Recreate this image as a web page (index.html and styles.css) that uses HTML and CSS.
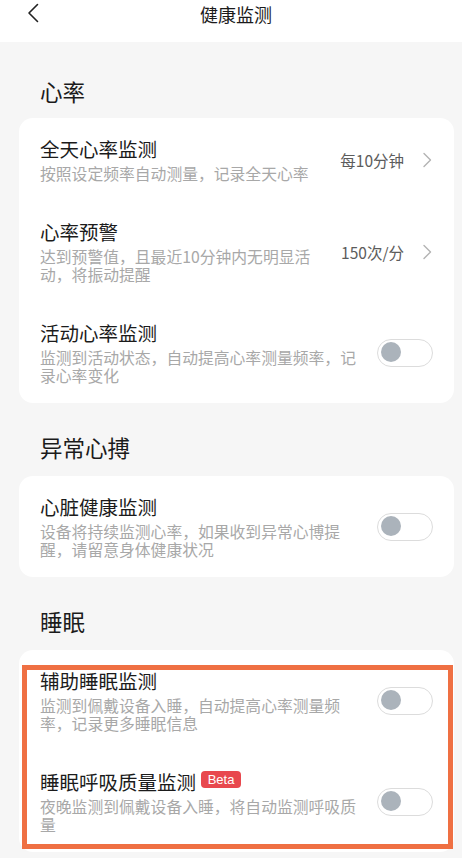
FILE: index.html
```html
<!DOCTYPE html>
<html lang="zh-CN">
<head>
<meta charset="utf-8">
<title>健康监测</title>
<link rel="stylesheet" href="styles.css">
</head>
<body>
<div class="page">
  <header class="topbar">
    <svg class="back" width="12" height="20" viewBox="0 0 12 20"><path d="M10.5 1.5 L2 10 L10.5 18.5" fill="none" stroke="#222" stroke-width="1.6" stroke-linecap="round" stroke-linejoin="round"/></svg>
    <div class="title">健康监测</div>
  </header>

  <main class="content">
    <h2 class="section first">心率</h2>
    <div class="card">
      <div class="row">
        <div class="text">
          <div class="name">全天心率监测</div>
          <div class="desc">按照设定频率自动测量，记录全天心率</div>
        </div>
        <div class="value">每10分钟</div>
        <svg class="chev" width="11" height="16" viewBox="0 0 11 16"><path d="M2 1.5 L8.5 8 L2 14.5" fill="none" stroke="#b3b3b3" stroke-width="1.4" stroke-linecap="round" stroke-linejoin="round"/></svg>
      </div>
      <div class="row">
        <div class="text">
          <div class="name">心率预警</div>
          <div class="desc">达到预警值，且最近10分钟内无明显活动，将振动提醒</div>
        </div>
        <div class="value">150次/分</div>
        <svg class="chev" width="11" height="16" viewBox="0 0 11 16"><path d="M2 1.5 L8.5 8 L2 14.5" fill="none" stroke="#b3b3b3" stroke-width="1.4" stroke-linecap="round" stroke-linejoin="round"/></svg>
      </div>
      <div class="row">
        <div class="text wide">
          <div class="name">活动心率监测</div>
          <div class="desc">监测到活动状态，自动提高心率测量频率，记录心率变化</div>
        </div>
        <div class="toggle"><span class="knob"></span></div>
      </div>
    </div>

    <h2 class="section">异常心搏</h2>
    <div class="card">
      <div class="row">
        <div class="text wide">
          <div class="name">心脏健康监测</div>
          <div class="desc">设备将持续监测心率，如果收到异常心博提醒，请留意身体健康状况</div>
        </div>
        <div class="toggle"><span class="knob"></span></div>
      </div>
    </div>

    <h2 class="section">睡眠</h2>
    <div class="card marked">
      <div class="row">
        <div class="text wide">
          <div class="name">辅助睡眠监测</div>
          <div class="desc">监测到佩戴设备入睡，自动提高心率测量频率，记录更多睡眠信息</div>
        </div>
        <div class="toggle"><span class="knob"></span></div>
      </div>
      <div class="row">
        <div class="text wide">
          <div class="name">睡眠呼吸质量监测<span class="badge">Beta</span></div>
          <div class="desc">夜晚监测到佩戴设备入睡，将自动监测呼吸质量</div>
        </div>
        <div class="toggle"><span class="knob"></span></div>
      </div>
      <div class="highlight"></div>
    </div>
  </main>
</div>
</body>
</html>
```

FILE: styles.css
```css
* { box-sizing: border-box; }
html, body {
  margin: 0;
  padding: 0;
}
body {
  width: 462px;
  height: 858px;
  overflow: hidden;
  background: #f6f6f6;
  font-family: "Noto Sans CJK SC", "Noto Sans", sans-serif;
  color: #1b1b1b;
}
.page {
  width: 462px;
}
.topbar {
  position: relative;
  height: 42px;
  background: #ffffff;
}
.back {
  position: absolute;
  left: 27px;
  top: 3px;
}
.title {
  text-align: center;
  font-size: 18px;
  line-height: 29px;
  padding-left: 10px;
  color: #1b1b1b;
}
.content {
  padding: 0 8px 0 19px;
}
.section {
  margin: 0;
  font-weight: normal;
  font-size: 22.5px;
  line-height: 32px;
  padding: 28px 0 13px 21px;
  color: #1b1b1b;
}
.section.first {
  padding-top: 33px;
  padding-bottom: 11px;
}
.card {
  background: #ffffff;
  border-radius: 14px;
}
.card.marked {
  position: relative;
}
.row {
  display: flex;
  align-items: center;
  padding: 18px 21px 17px 21px;
}
.text {
  flex: 1;
  min-width: 0;
  margin-right: 12px;
}
.name {
  font-size: 19.5px;
  line-height: 26px;
  color: #1b1b1b;
  display: flex;
  align-items: center;
}
.desc {
  margin-top: 3px;
  font-size: 15.8px;
  line-height: 18.5px;
  color: #a8a8a8;
}
.value {
  font-size: 15.5px;
  color: #5c5c5c;
  white-space: nowrap;
  margin-right: 18px;
}
.chev {
  flex: none;
  margin-right: 0;
}
.toggle {
  flex: none;
  position: relative;
  width: 56px;
  height: 28px;
  border: 1.5px solid #dcdcdc;
  border-radius: 14px;
  background: #ffffff;
}
.knob {
  position: absolute;
  left: 3px;
  top: 2.5px;
  width: 20px;
  height: 20px;
  border-radius: 50%;
  background: #abb3bb;
}
.badge {
  display: inline-block;
  margin-left: 5px;
  width: 40px;
  height: 17px;
  line-height: 17px;
  border-radius: 4px;
  background: #e8484e;
  color: #ffffff;
  font-family: "Liberation Sans", Arial, sans-serif;
  font-size: 13px;
  text-align: center;
  position: relative;
  top: -2px;
}
.highlight {
  position: absolute;
  top: 15px;
  left: 3px;
  right: 1px;
  bottom: 3px;
  border: 5px solid #ef7043;
  pointer-events: none;
}
```
